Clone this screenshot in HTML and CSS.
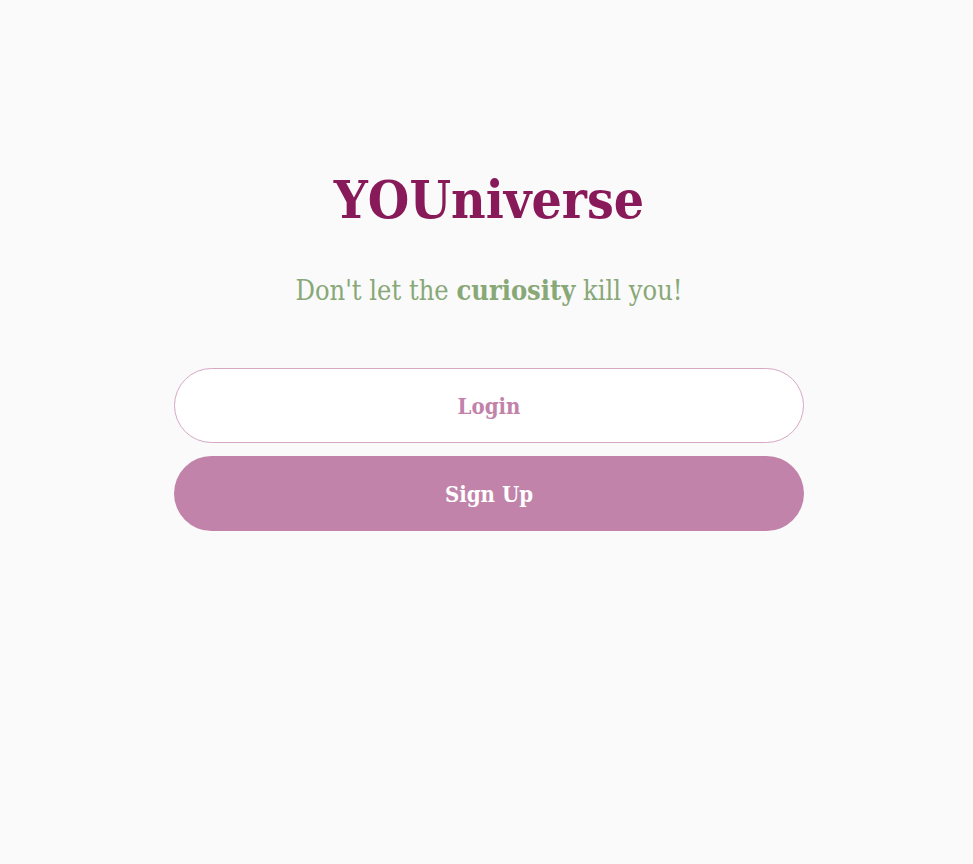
FILE: index.html
```html
<!DOCTYPE html>
<html>
<head>
<meta charset="utf-8">
<link rel="stylesheet" href="styles.css">
</head>
<body>
<main class="page">
  <h1 class="title">YOUniverse</h1>
  <p class="tagline">Don't let the <strong>curiosity</strong> kill you!</p>
  <div class="actions">
    <button class="btn btn-outline">Login</button>
    <button class="btn btn-filled">Sign Up</button>
  </div>
</main>
</body>
</html>
```
FILE: styles.css
```css
html, body {
  margin: 0;
  padding: 0;
  background: #fafafa;
}
body {
  font-family: "Roboto Slab", "DejaVu Serif Condensed", "DejaVu Serif", serif;
}
.page {
  display: flex;
  flex-direction: column;
  align-items: center;
  padding: 159px 0 0 5px;
}
.title {
  margin: 0;
  font-size: 53px;
  line-height: 80px;
  font-weight: 700;
  color: #881a5a;
}
.tagline {
  margin: 35px 0 0;
  font-size: 27px;
  line-height: 34px;
  color: #88a878;
  font-weight: 400;
}
.tagline strong {
  font-weight: 700;
}
.actions {
  margin-top: 60px;
  width: 630px;
  display: flex;
  flex-direction: column;
  gap: 13px;
}
.btn {
  height: 75px;
  border-radius: 38px;
  font-family: inherit;
  font-size: 22px;
  font-weight: 700;
  cursor: pointer;
}
.btn-outline {
  background: #ffffff;
  border: 1px solid #d6a8c4;
  color: #c183a9;
}
.btn-filled {
  background: #c183a9;
  border: none;
  color: #ffffff;
}
```
